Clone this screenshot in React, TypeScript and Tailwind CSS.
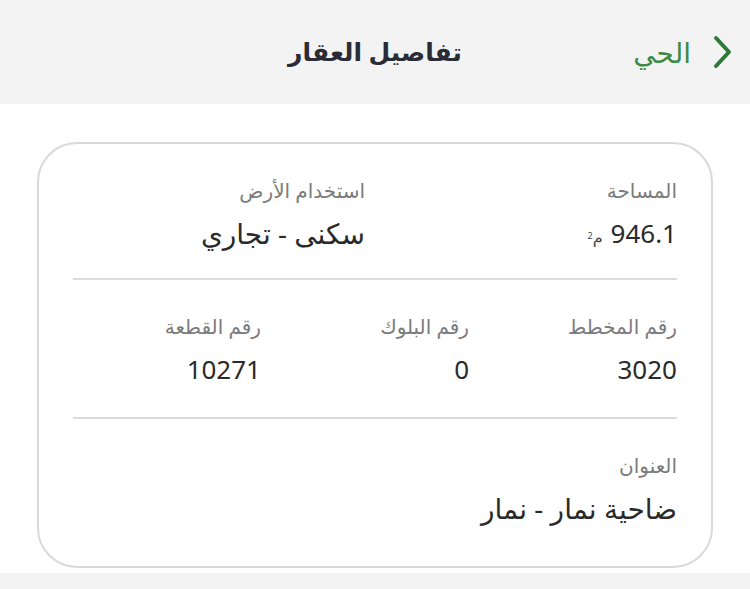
import React from 'react';

const font = { fontFamily: '"Noto Sans", "DejaVu Sans", sans-serif' };

const Field = ({ label, value, ar }: { label: string; value: React.ReactNode; ar?: boolean }) => (
  <div className="flex flex-col items-start">
    <span className="text-[20px] leading-[28px] text-[#7b7b7b]">{label}</span>
    <span className={`mt-[12px] leading-[32px] text-[#2a2a2a] ${ar ? 'text-[28px]' : 'text-[26px]'}`}>{value}</span>
  </div>
);

export default function App() {
  return (
    <div dir="rtl" style={font} className="min-h-screen bg-[#f3f3f3] flex flex-col">
      <header className="h-[104px] grid grid-cols-[1fr_auto_1fr] items-center pr-[17px] pl-[17px]">
        <div className="flex items-center gap-[22px]">
          <svg width="20" height="34" viewBox="0 0 20 34" fill="none" className="shrink-0">
            <polyline points="3,3 16,17 3,31" stroke="#2e7a36" strokeWidth="4" strokeLinecap="round" strokeLinejoin="round" />
          </svg>
          <span className="text-[28px] text-[#3f8a45] leading-none">الحي</span>
        </div>
        <h1 className="text-[25px] font-bold text-[#2b2b36]">تفاصيل العقار</h1>
        <div />
      </header>

      <main className="bg-white pt-[38px] pb-[5px] px-[37px]">
        <div className="rounded-[40px] border-2 border-[#d9d9d9] bg-white px-[34px]">
          <section className="grid grid-cols-2 gap-5 pt-[33px] pb-[25px] border-b-2 border-[#dcdcdc]">
            <Field
              label="المساحة"
              value={
                <span className="inline-flex items-baseline gap-[8px]">
                  <span>946.1</span>
                  <span className="text-[16px] text-[#444]">
                    م<sup className="text-[9px]">2</sup>
                  </span>
                </span>
              }
            />
            <Field label="استخدام الأرض" value="سكنى - تجاري" ar />
          </section>

          <section className="grid grid-cols-3 gap-5 pt-[33px] pb-[32px] border-b-2 border-[#dcdcdc]">
            <Field label="رقم المخطط" value="3020" />
            <Field label="رقم البلوك" value="0" />
            <Field label="رقم القطعة" value="10271" />
          </section>

          <section className="pt-[33px] pb-[42px]">
            <Field label="العنوان" value="ضاحية نمار - نمار" ar />
          </section>
        </div>
      </main>
    </div>
  );
}
